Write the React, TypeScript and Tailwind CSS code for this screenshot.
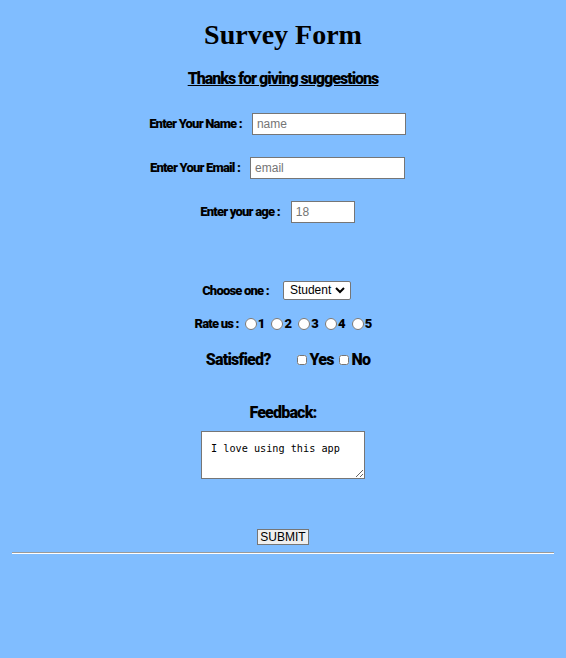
const label = "font-['Roboto',sans-serif] font-black tracking-[-0.8px] text-black";

export default function App() {
    return (
        <div className="min-h-[658px] w-full bg-[#80bdff] flex flex-col items-center font-['Liberation_Sans',Arial,sans-serif]">
            {/* Heading */}
            <h1 className="mt-[17px] h-[36px] leading-[36px] text-[28px] font-bold font-['Liberation_Serif',serif] text-black">
                Survey Form
            </h1>
            <p className={`mt-[16px] h-[20px] leading-[20px] text-[16px] underline ${label} tracking-[-1px]`}>
                Thanks for giving suggestions
            </p>

            {/* Text inputs */}
            <div className="mt-[24px] h-[22px] flex items-center pr-[11px]">
                <span className={`text-[13px] ${label}`}>Enter Your Name :</span>
                <input
                    type="text"
                    placeholder="name"
                    className="ml-[10px] w-[154px] h-[22px] bg-white border border-[#767676] px-[4px] text-[12px] placeholder:text-[#757575]"
                />
            </div>
            <div className="mt-[22px] h-[22px] flex items-center pr-[11px]">
                <span className={`text-[13px] ${label}`}>Enter Your Email :</span>
                <input
                    type="email"
                    placeholder="email"
                    className="ml-[10px] w-[155px] h-[22px] bg-white border border-[#767676] px-[4px] text-[12px] placeholder:text-[#757575]"
                />
            </div>
            <div className="mt-[22px] h-[22px] flex items-center pr-[11px]">
                <span className={`text-[13px] ${label}`}>Enter your age :</span>
                <input
                    type="number"
                    placeholder="18"
                    className="ml-[11px] w-[64px] h-[22px] bg-white border border-[#767676] px-[4px] text-[12px] placeholder:text-[#757575]"
                />
            </div>

            {/* Select */}
            <div className="mt-[58px] h-[19px] flex items-center pr-[13px]">
                <span className={`text-[13px] ${label}`}>Choose one :</span>
                <div className="relative ml-[14px] flex">
                    <select className="appearance-none w-[68px] h-[19px] bg-white border border-[#767676] pl-[6px] text-[12px] leading-[17px] text-black rounded-[2px]">
                        <option>Student</option>
                        <option>Teacher</option>
                        <option>Other</option>
                    </select>
                    <svg
                        className="absolute right-[6px] top-[6px] pointer-events-none"
                        width="10"
                        height="7"
                        viewBox="0 0 10 7"
                        fill="none"
                    >
                        <path d="M1 1 L5 5 L9 1" stroke="black" strokeWidth="2" />
                    </svg>
                </div>
            </div>

            {/* Rating */}
            <div className={`mt-[16px] h-[16px] flex items-center text-[13px] ${label}`}>
                <span className="mr-[6px]">Rate us :</span>
                {[1, 2, 3, 4, 5].map((n) => (
                    <label key={n} className="flex items-center mr-[7px] last:mr-0">
                        <input type="radio" name="rate" className="w-[12px] h-[12px] m-0 mr-[1px]" />
                        <span>{n}</span>
                    </label>
                ))}
            </div>

            {/* Satisfied */}
            <div className={`mt-[18px] h-[20px] flex items-center text-[16px] pl-[10px] ${label}`}>
                <span>Satisfied?</span>
                <label className="flex items-center ml-[26px]">
                    <input type="checkbox" className="w-[10px] h-[10px] m-0 mr-[3px]" />
                    <span>Yes</span>
                </label>
                <label className="flex items-center ml-[5px]">
                    <input type="checkbox" className="w-[10px] h-[10px] m-0 mr-[3px]" />
                    <span>No</span>
                </label>
            </div>

            {/* Feedback */}
            <p className={`mt-[33px] h-[20px] leading-[20px] text-[16px] ${label}`}>Feedback:</p>
            <textarea
                defaultValue="I love using this app"
                className="mt-[8px] w-[164px] h-[48px] bg-white border border-[#767676] px-[9px] py-[10px] text-[10.2px] leading-[14px] font-['DejaVu_Sans_Mono',monospace] text-black"
            />

            {/* Submit */}
            <button className="mt-[50px] h-[16px] px-[2px] bg-[#efefef] border border-[#767676] text-[12px] leading-[14px] text-black font-['Liberation_Sans',Arial,sans-serif]">
                SUBMIT
            </button>
            <hr className="mt-[7px] w-[542px] border-t border-t-[#9a9a9a] border-b border-b-white" />
        </div>
    );
}
